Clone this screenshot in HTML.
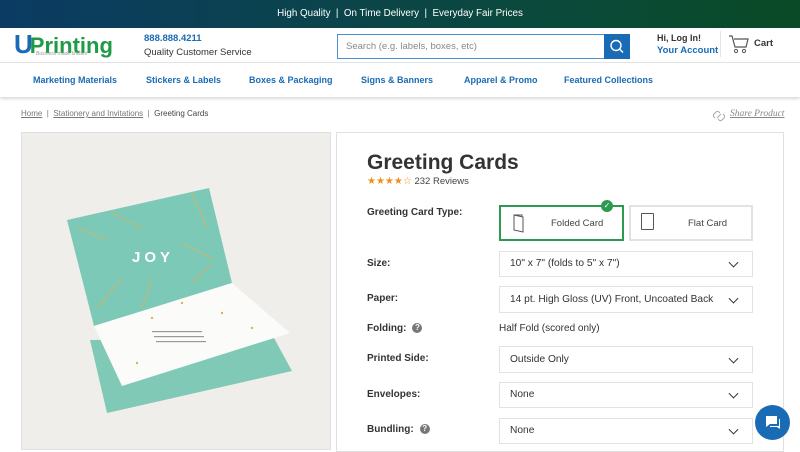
<!DOCTYPE html>
<html><head><style>
*{box-sizing:border-box;margin:0;padding:0}
body{width:800px;height:450px;overflow:hidden;font-family:"Liberation Sans",sans-serif;background:#fff;position:relative;color:#333}
.abs{position:absolute}
.top{left:0;top:0;width:800px;height:28px;background:linear-gradient(90deg,#0b3b63,#0b4a3a 70%,#0a4a26);color:#fff;font-size:9.8px;text-align:center;line-height:28px}
.hdr{left:0;top:28px;width:800px;height:35px;border-bottom:1px solid #e3e3e3}
.nav{left:0;top:64px;width:800px;height:33px;box-shadow:0 2px 3px rgba(0,0,0,.15);font-size:9px;font-weight:bold;color:#1a6bb5}
.nav span{position:absolute;top:11px}
.sel{left:499px;width:254px;border:1px solid #e2e2e2;font-size:10.2px;color:#333;padding-left:10px}
.sel:after{content:"";position:absolute;right:15px;top:50%;width:6px;height:6px;border-right:1.5px solid #333;border-bottom:1.5px solid #333;transform:translateY(-70%) rotate(45deg)}
.lbl{left:367px;font-size:10px;font-weight:bold;color:#333}
.q{display:inline-block;width:10px;height:10px;border-radius:50%;background:#777;color:#fff;font-size:8px;text-align:center;line-height:10px;margin-left:6px;vertical-align:1px}
</style></head><body>
<div class="abs top">High Quality &nbsp;|&nbsp; On Time Delivery &nbsp;|&nbsp; Everyday Fair Prices</div>
<div class="abs hdr">
 <div class="abs" style="left:14px;top:2px;font-size:26px;font-weight:bold;color:#1a6bb5;line-height:28px">U<span style="color:#1f9a45;font-size:22px;margin-left:-3px">Printing</span></div>
 <div class="abs" style="left:36px;top:23px;font-size:5px;color:#999;font-style:italic">Business made brilliant</div>
 <div class="abs" style="left:144px;top:5px;font-size:9.5px;font-weight:bold;color:#1a6bb5">888.888.4211</div>
 <div class="abs" style="left:144px;top:19px;font-size:9.5px;color:#333">Quality Customer Service</div>
 <div class="abs" style="left:337px;top:6px;width:268px;height:25px;border:1px solid #4a8fd0;font-size:9.5px;color:#888;padding:6px 0 0 8px">Search (e.g. labels, boxes, etc)</div>
 <div class="abs" style="left:604px;top:6px;width:26px;height:25px;background:#1a6bb5"><svg width="26" height="25"><circle cx="12" cy="11.5" r="5" fill="none" stroke="#fff" stroke-width="1.4"/><path d="M15.5 15l3.5 3.5" stroke="#fff" stroke-width="1.4"/></svg></div>
 <div class="abs" style="left:657px;top:5px;font-size:9px;font-weight:bold;color:#333">Hi, Log In!</div>
 <div class="abs" style="left:657px;top:17px;font-size:9.5px;font-weight:bold;color:#1a6bb5">Your Account</div>
 <div class="abs" style="left:720px;top:3px;width:1px;height:26px;background:#e3e3e3"></div>
 <svg class="abs" style="left:728px;top:6px" width="22" height="20"><path d="M1 2h3l3 11h11l2-8H6" fill="none" stroke="#555" stroke-width="1.2"/><circle cx="8" cy="17" r="1.6" fill="none" stroke="#555"/><circle cx="16" cy="17" r="1.6" fill="none" stroke="#555"/></svg>
 <div class="abs" style="left:754px;top:10px;font-size:9.5px;font-weight:bold;color:#333">Cart</div>
</div>
<div class="abs nav"><span style="left:33px">Marketing Materials</span><span style="left:146px">Stickers &amp; Labels</span><span style="left:249px">Boxes &amp; Packaging</span><span style="left:361px">Signs &amp; Banners</span><span style="left:464px">Apparel &amp; Promo</span><span style="left:564px">Featured Collections</span></div>
<div class="abs" style="left:21px;top:109px;font-size:8px;color:#777"><u>Home</u> &nbsp;|&nbsp; <u>Stationery and Invitations</u> &nbsp;|&nbsp; <span style="color:#444">Greeting Cards</span></div>
<svg class="abs" style="left:712px;top:109px" width="14" height="14"><path d="M3 9l-1-1a2 2 0 0 1 0-3l2-2a2 2 0 0 1 3 0l1 1M11 5l1 1a2 2 0 0 1 0 3l-2 2a2 2 0 0 1-3 0l-1-1M5 9l4-4" fill="none" stroke="#aaa" stroke-width="1"/></svg>
<div class="abs" style="left:730px;top:109px;font-size:9.5px;color:#888;font-style:italic;font-family:'Liberation Serif',serif"><u>Share Product</u></div>
<div class="abs" style="left:21px;top:132px;width:310px;height:318px;background:#f0eeea;border:1px solid #e0e0e0;overflow:hidden">
 <svg width="310" height="318">
  <polygon points="68,207 252,205 270,238 85,280" fill="#80c9b7"/>
  <polygon points="45,87 187,55 210,150 72,193" fill="#7dc9b8"/>
  <polygon points="72,193 210,150 268,200 100,253" fill="#fbfbfa"/>
  <text x="110" y="129" fill="#fff" font-size="15" font-weight="bold" font-family="Liberation Sans" letter-spacing="4">JOY</text>
  <g stroke="#d9b35c" stroke-width="1" fill="none" opacity=".8"><path d="M55 95l30 12M90 80l30 15M170 60l15 35M160 110l30 15M75 175l25-30M120 175l10-30M190 130l-20 20"/></g>
  <g fill="#d9b35c"><circle cx="130" cy="185" r="1.2"/><circle cx="160" cy="170" r="1.2"/><circle cx="200" cy="180" r="1.2"/><circle cx="115" cy="230" r="1.2"/><circle cx="230" cy="195" r="1.2"/></g>
  <g fill="#999" font-size="3"><rect x="130" y="198" width="50" height="1.2"/><rect x="132" y="203" width="50" height="1.2"/><rect x="134" y="208" width="50" height="1.2"/></g>
 </svg>
</div>
<div class="abs" style="left:336px;top:132px;width:448px;height:320px;border:1px solid #e0e0e0"></div>
<div class="abs" style="left:367px;top:151px;font-size:21px;font-weight:bold;color:#333">Greeting Cards</div>
<div class="abs" style="left:367px;top:176px;font-size:9.5px;color:#444"><span style="color:#f0901d;font-size:10px">★★★★☆</span> 232 Reviews</div>
<div class="abs lbl" style="top:207px">Greeting Card Type:</div>
<div class="abs" style="left:499px;top:205px;width:125px;height:36px;border:2px solid #2d9a4f;font-size:9.5px;color:#444;padding:11px 0 0 50px">Folded Card</div>
<svg class="abs" style="left:512px;top:213px" width="14" height="20"><path d="M2 2l9 2v15l-9-2zM2 2h8v2" fill="none" stroke="#555" stroke-width="1"/></svg>
<div class="abs" style="left:601px;top:200px;width:12px;height:12px;border-radius:50%;background:#2d9a4f;color:#fff;font-size:8px;text-align:center;line-height:12px">✓</div>
<div class="abs" style="left:629px;top:205px;width:124px;height:36px;border:2px solid #e2e2e2;font-size:9.5px;color:#444;padding:11px 0 0 57px">Flat Card</div>
<div class="abs" style="left:641px;top:213px;width:13px;height:17px;border:1.2px solid #555;border-radius:1px"></div>
<div class="abs lbl" style="top:258px">Size:</div>
<div class="abs sel" style="top:251px;height:26px;line-height:24px">10" x 7" (folds to 5" x 7")</div>
<div class="abs lbl" style="top:293px">Paper:</div>
<div class="abs sel" style="top:286px;height:27px;line-height:25px">14 pt. High Gloss (UV) Front, Uncoated Back</div>
<div class="abs lbl" style="top:323px">Folding:<span class="q">?</span></div>
<div class="abs" style="left:499px;top:323px;font-size:10px;color:#333">Half Fold (scored only)</div>
<div class="abs lbl" style="top:353px">Printed Side:</div>
<div class="abs sel" style="top:346px;height:27px;line-height:25px">Outside Only</div>
<div class="abs lbl" style="top:389px">Envelopes:</div>
<div class="abs sel" style="top:382px;height:26px;line-height:24px">None</div>
<div class="abs lbl" style="top:424px">Bundling:<span class="q">?</span></div>
<div class="abs sel" style="top:418px;height:26px;line-height:24px">None</div>
<div class="abs" style="left:755px;top:405px;width:35px;height:35px;border-radius:50%;background:#1a6bb5"><svg width="35" height="35"><path d="M11 11h11v8h-7l-4 3z" fill="#fff"/><path d="M24 14h1v10l-3-2h-7v-1h9z" fill="#fff"/></svg></div>
</body></html>
